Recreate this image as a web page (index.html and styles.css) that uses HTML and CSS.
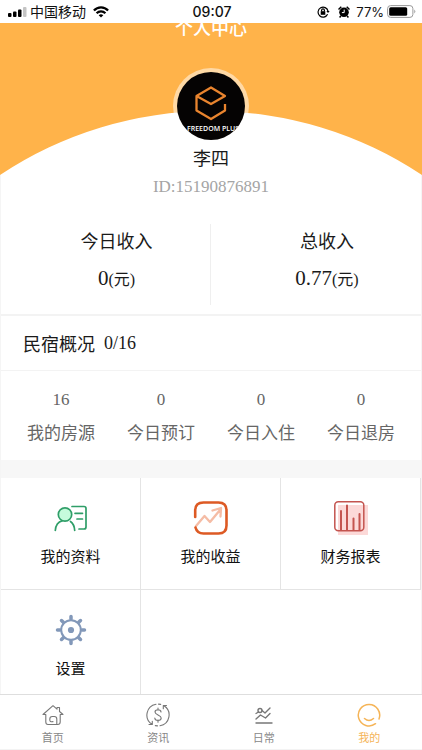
FILE: index.html
```html
<!DOCTYPE html>
<html lang="zh-CN">
<head>
<meta charset="utf-8">
<meta name="viewport" content="width=device-width, initial-scale=1">
<title>个人中心</title>
<link rel="stylesheet" href="styles.css">
</head>
<body>
<div class="status">
  <div class="status-side">
    <svg class="signal" width="19" height="10" viewBox="0 0 19 10"><rect x="0" y="6" width="3.5" height="4" rx="1"/><rect x="5" y="4.5" width="3.5" height="5.5" rx="1"/><rect x="10" y="2.5" width="3.5" height="7.5" rx="1"/><rect x="15" y="0" width="3.5" height="10" rx="1" fill="#c4c4c4"/></svg>
    <span class="carrier">中国移动</span>
    <svg width="16" height="12" viewBox="0 0 16 12" fill="none" stroke="#000" stroke-width="2.2"><path d="M.9 4.6C4.800.3 11.200.3 15.100 4.600M3.600 7.300C6 4.700 10 4.700 12.400 7.300"/><path d="M8 11.500 5.700 9.200Q8 7.200 10.300 9.200Z" fill="#000" stroke="none"/></svg>
  </div>
  <time class="clock">09:07</time>
  <div class="status-side status-right">
    <svg width="13" height="12" viewBox="0 0 13 12" fill="none" stroke="#000" stroke-width="1.2"><path d="M10.600 8.300A5 5 0 1 1 11 5.200"/><path d="m9.400 5 1.600 2L12.700 5Z" fill="#000" stroke="none"/><rect x="3.700" y="5.200" width="4.600" height="3.600" fill="#000" stroke="none"/><path d="M4.600 5.500V4.200a1.400 1.400 0 0 1 2.800 0v1.300"/></svg>
    <svg class="alarm" width="12" height="12" viewBox="0 0 12 12"><circle cx="6" cy="6.300" r="4.800"/><path d="M.5 3.500 3.300.8M11.500 3.500 8.700.8M2.800 10 1.600 11.500M9.200 10l1.200 1.500" stroke="#000" stroke-width="1.500"/><path d="M6.200 3.600v3H3.900" fill="none" stroke="#fff"/></svg>
    <span class="percent">77%</span>
    <svg width="29" height="13" viewBox="0 0 29 13"><rect x=".6" y=".6" width="25.300" height="11.800" rx="3" fill="none" stroke="#999"/><rect x="2.200" y="2.200" width="18" height="8.600" rx="1.500"/><path d="M27.300 4.500q2 2 0 4Z" fill="#999"/></svg>
  </div>
</div>

<main class="page">
  <header class="profile">
    <svg class="curve" viewBox="0 0 422 153" preserveAspectRatio="none"><path d="M0 0H422V152A380 380 0 0 0 0 152Z" fill="#ffb34a"/></svg>
    <h1 class="title">个人中心</h1>
    <svg class="avatar" width="76" height="76" viewBox="0 0 76 76" role="img" aria-label="FREEDOM PLUS">
      <defs><clipPath id="disc"><circle cx="38" cy="38" r="34"/></clipPath></defs>
      <circle cx="38" cy="38" r="38" fill="#fff" fill-opacity=".5"/>
      <circle cx="38" cy="38" r="34" fill="#050303"/>
      <path d="m23.500 28 14.500-8.500L52 28l-14 8Zm0 0v14.500L38 51l14-8.500V36" fill="none" stroke="#e9842e" stroke-width="2.300" stroke-linejoin="round"/>
      <text class="logo-text" x="14" y="63" clip-path="url(#disc)">FREEDOM PLUS</text>
    </svg>
    <p class="name">李四</p>
    <p class="uid">ID:15190876891</p>
  </header>

  <section class="income">
    <div class="income-item"><h2>今日收入</h2><p>0<small>(元)</small></p></div>
    <div class="income-item"><h2>总收入</h2><p>0.77<small>(元)</small></p></div>
  </section>

  <section class="overview">
    <h2>民宿概况</h2><span>0/16</span>
  </section>

  <dl class="stats">
    <div><dt>我的房源</dt><dd>16</dd></div>
    <div><dt>今日预订</dt><dd>0</dd></div>
    <div><dt>今日入住</dt><dd>0</dd></div>
    <div><dt>今日退房</dt><dd>0</dd></div>
  </dl>

  <div class="menu">
    <a class="cell" href="#info">
      <svg width="36" height="36" viewBox="0 0 36 36" fill="none" stroke="#2f9e68" stroke-width="1.700" stroke-linecap="round" stroke-linejoin="round"><circle cx="12" cy="14.500" r="6.700" fill="#c5fbdc"/><path d="M2.300 30.500c.2-5 3-9 6.700-9.700M17.500 21.500c2.500 1.800 4 4.800 4.200 9M19 6.500h12q2 0 2 2V27q0 2-2 2h-5M22 13.300h7.500M24 19h5.500"/></svg>
      <span>我的资料</span>
    </a>
    <a class="cell" href="#earnings">
      <svg width="36" height="36" viewBox="0 0 36 36" fill="none" stroke-linecap="round" stroke-linejoin="round"><path d="m3 26 8.500-10 5.500 6 10-12M19.500 10.500 28 8l-.5 8.500" stroke="#f5bca5" stroke-width="2.300"/><path d="M2.200 17V10.500Q2.200 2.500 10.500 2.500h15Q33.500 2.500 33.500 10.500v15q0 8-8 8h-15Q4 33.500 2.500 27.500" stroke="#dd5a24" stroke-width="2.600"/></svg>
      <span>我的收益</span>
    </a>
    <a class="cell" href="#report">
      <svg width="36" height="36" viewBox="0 0 36 36" fill="none" stroke="#c4544f" stroke-linecap="round"><rect x="5" y="5" width="30" height="30" fill="#fcd9d8" stroke="none"/><rect x="1.800" y="1.800" width="29" height="29" rx="3.500" stroke-width="1.500"/><path d="M8 11v19M14 5.500V30M20.500 18.500V30M26.500 14v16" stroke-width="2"/></svg>
      <span>财务报表</span>
    </a>
    <a class="cell" href="#settings">
      <svg width="36" height="36" viewBox="0 0 36 36" fill="none" stroke="#8298b9" stroke-linecap="round"><circle cx="18" cy="18" r="9.800" stroke-width="2"/><circle cx="18" cy="18" r="3.100" fill="#8298b9" stroke="none"/><path d="M18 4.500V7M18 29v2.500M4.500 18H7M29 18h2.500M8.500 8.500l1.800 1.800M25.700 25.700l1.800 1.800M27.500 8.500l-1.800 1.800M10.300 25.700l-1.800 1.800" stroke-width="3.500"/></svg>
      <span>设置</span>
    </a>
  </div>
</main>

<nav class="tabs">
  <a href="#home">
    <svg width="24" height="24" viewBox="0 0 24 24" fill="none" stroke="#777" stroke-width="1.100" stroke-linecap="round" stroke-linejoin="round"><path d="M2 11.500 12 2.700l4 3.500V4.500h2.500v4L22 11.500h-2.800V19q0 2.500-2.500 2.500H7Q4.800 21.500 4.800 19v-7.500H2M15.800 21.500V16q0-2.500-2.500-2.500h-2q-2.500 0-2.500 2.500v1q0 2.200 3.200 1.600"/></svg>
    <span>首页</span>
  </a>
  <a href="#news">
    <svg width="24" height="24" viewBox="0 0 24 24" fill="none" stroke="#777" stroke-width="1.100" stroke-linecap="round" stroke-linejoin="round"><path d="M6 21.300A11 11 0 0 1 10 1.200M12.500 1.100l2.200.3M18 2.700A11 11 0 0 1 14 22.800M11.500 22.900l-2.200-.3M17.300 5.700V2.500h3.200M3 21.500h3.300v-3.300"/><path d="M15 9c0-3-6-3-6 0s6.200 2.800 6.200 6-6.400 3.200-6.400 0M12 5v2M12 17.200v2"/></svg>
    <span>资讯</span>
  </a>
  <a href="#daily">
    <svg width="24" height="24" viewBox="0 0 24 24" fill="none" stroke="#777" stroke-width="1.400" stroke-linecap="round" stroke-linejoin="round"><circle cx="8" cy="7.500" r="2"/><path d="m4 10.500 2.500-1.500M10 7.500l3 2.500 5-5M4 16l4.500-4 5 3L18 10.500M4 20h16"/></svg>
    <span>日常</span>
  </a>
  <a class="active" href="#me" aria-current="page">
    <svg width="24" height="24" viewBox="0 0 24 24" fill="none" stroke="#f5b457" stroke-width="1.500" stroke-linecap="round"><path d="M18.500 20.700A10.700 10.700 0 1 1 22 16M7.500 15.500q4.500 4 9 0"/></svg>
    <span>我的</span>
  </a>
</nav>
</body>
</html>
```
FILE: styles.css
```css
* {
  box-sizing: border-box;
}

body {
  display: flex;
  flex-direction: column;
  min-height: 100vh;
  margin: 0;
  background: #fff;
  color: #1a1a1a;
  font-family: "Liberation Serif", "Noto Sans CJK SC", serif;
}

h1, h2, p, dl, dd {
  margin: 0;
  font-weight: 400;
}

a {
  color: inherit;
  text-decoration: none;
}

svg {
  display: block;
}

.status {
  display: flex;
  align-items: center;
  height: 23px;
  padding: 0 6px 0 8px;
  color: #111;
  font: 14px/22px Inter, "Noto Sans CJK SC", sans-serif;
}

.status-side {
  display: flex;
  flex: 1;
  align-items: center;
}

.carrier {
  margin: 0 7px 0 3px;
}

.clock {
  font-weight: 500;
}

.status-right {
  justify-content: flex-end;
}

.alarm {
  margin: 0 6px 0 8px;
}

.percent {
  margin-right: 3px;
  font-size: 13px;
}

.page {
  display: flex;
  flex: 1;
  flex-direction: column;
  border-left: 1px solid #f5f5f5;
  border-right: 1px solid #f5f5f5;
}

.profile {
  position: relative;
  z-index: 0;
  display: flex;
  flex-direction: column;
  align-items: center;
  margin: 0 -1px;
  overflow: hidden;
}

.curve {
  position: absolute;
  top: 0;
  left: 0;
  z-index: -1;
  width: 100%;
  height: 153px;
}

.title {
  margin-top: -7px;
  color: #fff;
  font-size: 18px;
  font-weight: 500;
  line-height: 26px;
}

.avatar {
  margin-top: 26px;
}

.logo-text {
  fill: #fff;
  font: 600 7px "Open Sans", sans-serif;
}

.name {
  margin-top: 2px;
  font-size: 18px;
  line-height: 26px;
}

.uid {
  margin-top: 4px;
  color: #a5a5a5;
  font-size: 17px;
  line-height: 22px;
}

.income {
  display: grid;
  grid-template-columns: 1fr 1fr;
  padding: 26px 0 9px;
  border-bottom: 2px solid #f3f3f3;
}

.income-item {
  height: 81px;
  padding: 5px 0 0 22px;
  text-align: center;
}

.income-item:first-child {
  border-right: 1px solid #efefef;
}

.income h2 {
  font-size: 18px;
  line-height: 26px;
}

.income p {
  margin-top: 8px;
  font-size: 21px;
  line-height: 30px;
}

.income small {
  font-size: 16px;
}

.overview {
  display: flex;
  gap: 9px;
  align-items: center;
  height: 55px;
  padding: 0 22px;
  border-bottom: 1px solid #f3f3f3;
  font-size: 18px;
}

.overview h2 {
  font-size: 18px;
}

.stats {
  display: grid;
  grid-template-columns: repeat(4, 1fr);
  padding: 16px 10px 13px;
  color: #666;
  font-size: 17px;
  line-height: 26px;
  text-align: center;
}

.stats div {
  display: flex;
  flex-direction: column-reverse;
  gap: 8px;
}

.menu {
  display: grid;
  flex: 1;
  grid-template-columns: repeat(3, 1fr);
  grid-template-rows: 112px 1fr;
  border-top: 18px solid #f7f7f7;
}

.cell {
  display: flex;
  flex-direction: column;
  gap: 10px;
  align-items: center;
  padding-top: 22px;
  border-right: 1px solid #e4e4e4;
  color: #111;
  font-size: 15px;
  line-height: 22px;
}

.cell:nth-child(-n+3) {
  border-bottom: 1px solid #e4e4e4;
}

.tabs {
  display: grid;
  grid-template-columns: repeat(4, 1fr);
  height: 56px;
  border-top: 1px solid #dedede;
  border-bottom: 1px solid #f3f3f3;
  color: #888;
  font-size: 11px;
  line-height: 16px;
}

.tabs a {
  display: flex;
  flex-direction: column;
  gap: 3px;
  align-items: center;
  padding-top: 8px;
}

.tabs .active {
  color: #f5b457;
}
```
